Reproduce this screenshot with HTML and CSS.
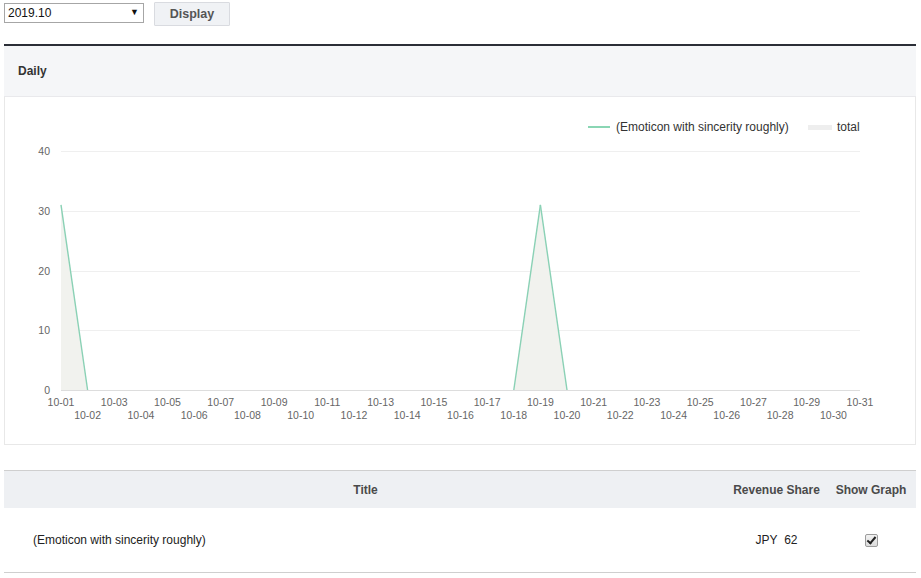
FILE: index.html
```html
<!DOCTYPE html>
<html>
<head>
<meta charset="utf-8">
<link rel="stylesheet" href="styles.css">
</head>
<body>
<div class="toolbar">
  <div class="select-wrap">
    <select class="month-select"><option>2019.10</option></select>
  </div>
  <button class="btn">Display</button>
</div>

<section class="panel">
  <div class="panel-head">Daily</div>
  <div class="chart-box">
    <svg class="chart" width="910" height="347" viewBox="0 0 910 347" xmlns="http://www.w3.org/2000/svg">
      <g class="legend">
        <line x1="583" y1="30" x2="605" y2="30" stroke="#8ad6b4" stroke-width="2"/>
        <text x="611" y="34">(Emoticon with sincerity roughly)</text>
        <rect x="803" y="28" width="24" height="5" fill="#eeeeee"/>
        <text x="832" y="34">total</text>
      </g>
      <g class="grid" stroke="#efefef" stroke-width="1">
        <line x1="56" y1="54.5" x2="855" y2="54.5"/>
        <line x1="56" y1="114.5" x2="855" y2="114.5"/>
        <line x1="56" y1="174.5" x2="855" y2="174.5"/>
        <line x1="56" y1="233.5" x2="855" y2="233.5"/>
      </g>
      <g class="ylab" text-anchor="end">
        <text x="45" y="58">40</text>
        <text x="45" y="118">30</text>
        <text x="45" y="178">20</text>
        <text x="45" y="237">10</text>
        <text x="45" y="297">0</text>
      </g>
      <polygon points="56,293 56,107.8 82.6,293 508.8,293 535.4,107.8 562,293" fill="#f1f2ee"/>
      <g stroke="#8ad1b5" stroke-width="1.4" fill="none">
        <line x1="56" y1="107.8" x2="82.6" y2="293"/>
        <line x1="508.8" y1="293" x2="535.4" y2="107.8"/>
        <line x1="535.4" y1="107.8" x2="562" y2="293"/>
      </g>
      <line x1="56" y1="293.5" x2="855" y2="293.5" stroke="#dddddd" stroke-width="1"/>
      <g class="xlab" text-anchor="middle">
        <text x="56" y="309">10-01</text>
        <text x="82.6" y="322">10-02</text>
        <text x="109.3" y="309">10-03</text>
        <text x="135.9" y="322">10-04</text>
        <text x="162.5" y="309">10-05</text>
        <text x="189.2" y="322">10-06</text>
        <text x="215.8" y="309">10-07</text>
        <text x="242.4" y="322">10-08</text>
        <text x="269.1" y="309">10-09</text>
        <text x="295.7" y="322">10-10</text>
        <text x="322.3" y="309">10-11</text>
        <text x="349" y="322">10-12</text>
        <text x="375.6" y="309">10-13</text>
        <text x="402.2" y="322">10-14</text>
        <text x="428.9" y="309">10-15</text>
        <text x="455.5" y="322">10-16</text>
        <text x="482.1" y="309">10-17</text>
        <text x="508.8" y="322">10-18</text>
        <text x="535.4" y="309">10-19</text>
        <text x="562" y="322">10-20</text>
        <text x="588.7" y="309">10-21</text>
        <text x="615.3" y="322">10-22</text>
        <text x="641.9" y="309">10-23</text>
        <text x="668.6" y="322">10-24</text>
        <text x="695.2" y="309">10-25</text>
        <text x="721.8" y="322">10-26</text>
        <text x="748.5" y="309">10-27</text>
        <text x="775.1" y="322">10-28</text>
        <text x="801.7" y="309">10-29</text>
        <text x="828.4" y="322">10-30</text>
        <text x="855" y="309">10-31</text>
      </g>
    </svg>
  </div>
</section>

<table class="data-table">
  <thead>
    <tr>
      <th class="col-title">Title</th>
      <th class="col-share">Revenue Share</th>
      <th class="col-graph">Show Graph</th>
    </tr>
  </thead>
  <tbody>
    <tr>
      <td class="cell-title">(Emoticon with sincerity roughly)</td>
      <td class="cell-share">JPY&nbsp; 62</td>
      <td class="cell-graph"><input class="check" type="checkbox" checked></td>
    </tr>
  </tbody>
</table>
</body>
</html>
```

FILE: styles.css
```css
html, body {
  margin: 0;
  background: #ffffff;
}
body {
  padding: 2px 5px 0 4px;
  font-family: "Liberation Sans", Arial, sans-serif;
  font-size: 12px;
  color: #333;
}
.toolbar {
  display: flex;
  align-items: flex-start;
  gap: 10px;
  height: 24px;
  margin-bottom: 18px;
}
.select-wrap {
  position: relative;
  margin-top: 1px;
}
.select-wrap::after {
  content: "\25BC";
  position: absolute;
  right: 5px;
  top: 4px;
  font-size: 9px;
  color: #111;
  pointer-events: none;
}
.month-select {
  appearance: none;
  -webkit-appearance: none;
  width: 140px;
  height: 20px;
  border: 1px solid #a6a6a6;
  border-radius: 0;
  background: #fff;
  padding: 0 0 0 3px;
  font-family: "Liberation Sans", Arial, sans-serif;
  font-size: 12px;
  color: #111;
  margin: 0;
}
.btn {
  width: 76px;
  height: 24px;
  border: 1px solid #d9dbe0;
  background: #f0f2f5;
  border-radius: 1px;
  font-family: "Liberation Sans", Arial, sans-serif;
  font-weight: bold;
  font-size: 12.5px;
  color: #555;
  padding: 0;
  margin: 0;
}
.panel {
  border-top: 2px solid #2b2e37;
}
.panel-head {
  height: 50px;
  background: #f5f6f8;
  border-bottom: 1px solid #e9e9ec;
  display: flex;
  align-items: center;
  padding-left: 14px;
  font-weight: bold;
  font-size: 12px;
  color: #333;
}
.chart-box {
  border: 1px solid #e8e8e8;
  border-top: none;
  height: 347px;
}
.chart {
  display: block;
}
.chart text {
  font-family: "Liberation Sans", Arial, sans-serif;
}
.legend text {
  font-size: 12px;
  fill: #333;
}
.ylab text, .xlab text {
  font-size: 10.5px;
  fill: #666;
}
.data-table {
  margin-top: 25px;
  width: 912px;
  border-collapse: collapse;
  table-layout: fixed;
}
.data-table thead tr {
  border-top: 1px solid #cfcfcf;
  background: #eef0f3;
}
.data-table th {
  height: 37px;
  padding: 0;
  font-weight: bold;
  font-size: 12px;
  color: #4a4a4a;
  text-align: center;
}
.col-title { width: 723px; }
.col-share { width: 99px; }
.col-graph { width: 90px; }
.data-table tbody tr {
  border-bottom: 1px solid #cfcfcf;
}
.data-table td {
  height: 64px;
  padding: 0;
  font-size: 12px;
  color: #222;
}
.cell-title {
  padding-left: 29px !important;
  text-align: left;
}
.cell-share {
  text-align: center;
}
.cell-graph {
  text-align: center;
}
.check {
  appearance: none;
  -webkit-appearance: none;
  position: relative;
  margin: 0;
  width: 13px;
  height: 13px;
  border: 1px solid #9c9c9c;
  border-radius: 2px;
  background: linear-gradient(#f2f2f2, #dcdcdc);
  vertical-align: middle;
}
.check:checked::after {
  content: "";
  position: absolute;
  left: 3px;
  top: 0px;
  width: 3px;
  height: 7px;
  border: solid #222;
  border-width: 0 2px 2px 0;
  transform: rotate(40deg);
}
```
